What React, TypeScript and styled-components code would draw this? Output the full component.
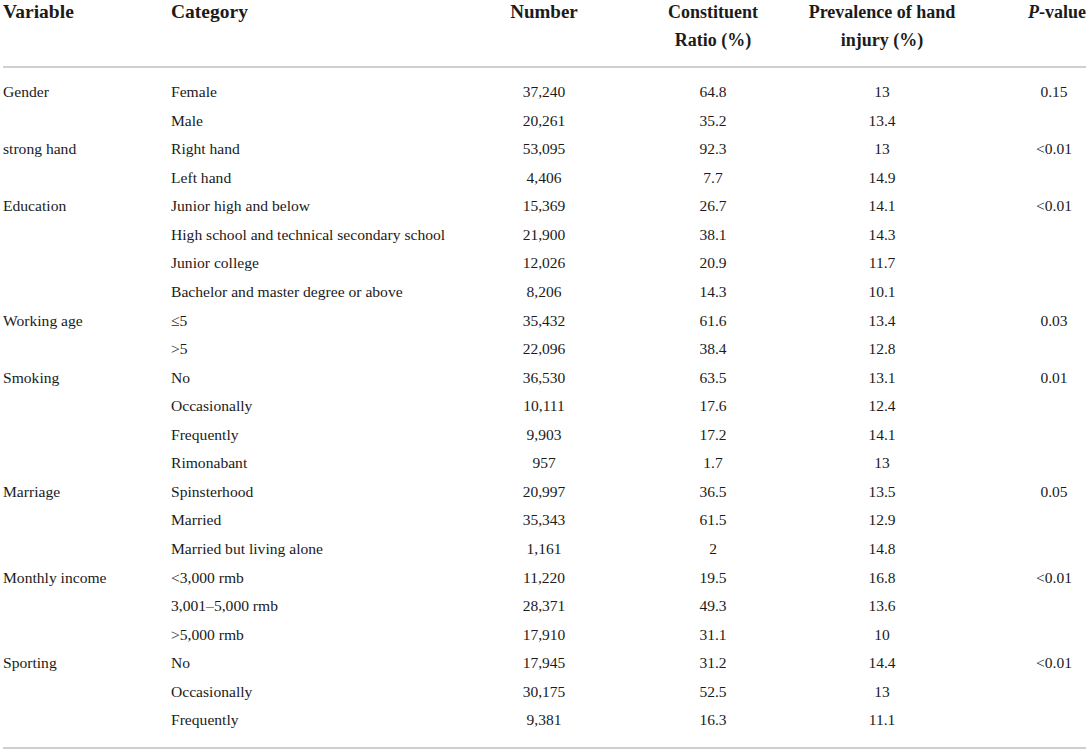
import React from "react";
import styled, { createGlobalStyle } from "styled-components";

const Global = createGlobalStyle`
  html, body { margin: 0; padding: 0; background: #fff; }
  body { font-family: "Liberation Serif", "Times New Roman", serif; color: #1b1b1b; }
`;

const Table = styled.table`
  width: 1083px;
  margin: -2px 0 0 3px;
  border-collapse: collapse;
  table-layout: fixed;
  font-family: "Liberation Serif", "Times New Roman", serif;
  color: #1b1b1b;
`;

const Head = styled.th<{ $align?: string; $size?: number }>`
  font-family: "Liberation Serif", "Times New Roman", serif;
  font-weight: bold;
  font-size: ${(p) => p.$size || 18}px;
  line-height: 28px;
  text-align: ${(p) => p.$align || "left"};
  vertical-align: top;
  padding: 0 0 12px 0;
  border-bottom: 2px solid #cfcfcf;
  white-space: nowrap;
  color: #1b1b1b;
`;

const Cell = styled.td<{ $num?: boolean; $pl?: number; $first?: boolean; $last?: boolean }>`
  font-family: "Liberation Serif", "Times New Roman", serif;
  font-size: ${(p) => (p.$num ? 15.5 : 15.6)}px;
  height: 28.57px;
  line-height: 28.57px;
  padding: ${(p) => (p.$first ? 10 : 0)}px 0 ${(p) => (p.$last ? 12 : 0)}px ${(p) => p.$pl || 0}px;
  text-align: ${(p) => (p.$num ? "center" : "left")};
  vertical-align: top;
  white-space: nowrap;
  color: #1b1b1b;
  border-bottom: ${(p) => (p.$last ? "2px solid #cfcfcf" : "none")};
`;

const Italic = styled.i`
  font-style: italic;
`;

type Row = [string, string, string, string, string, string];

const rows: Row[] = [
  ["Gender", "Female", "37,240", "64.8", "13", "0.15"],
  ["", "Male", "20,261", "35.2", "13.4", ""],
  ["strong hand", "Right hand", "53,095", "92.3", "13", "<0.01"],
  ["", "Left hand", "4,406", "7.7", "14.9", ""],
  ["Education", "Junior high and below", "15,369", "26.7", "14.1", "<0.01"],
  ["", "High school and technical secondary school", "21,900", "38.1", "14.3", ""],
  ["", "Junior college", "12,026", "20.9", "11.7", ""],
  ["", "Bachelor and master degree or above", "8,206", "14.3", "10.1", ""],
  ["Working age", "≤5", "35,432", "61.6", "13.4", "0.03"],
  ["", ">5", "22,096", "38.4", "12.8", ""],
  ["Smoking", "No", "36,530", "63.5", "13.1", "0.01"],
  ["", "Occasionally", "10,111", "17.6", "12.4", ""],
  ["", "Frequently", "9,903", "17.2", "14.1", ""],
  ["", "Rimonabant", "957", "1.7", "13", ""],
  ["Marriage", "Spinsterhood", "20,997", "36.5", "13.5", "0.05"],
  ["", "Married", "35,343", "61.5", "12.9", ""],
  ["", "Married but living alone", "1,161", "2", "14.8", ""],
  ["Monthly income", "<3,000 rmb", "11,220", "19.5", "16.8", "<0.01"],
  ["", "3,001–5,000 rmb", "28,371", "49.3", "13.6", ""],
  ["", ">5,000 rmb", "17,910", "31.1", "10", ""],
  ["Sporting", "No", "17,945", "31.2", "14.4", "<0.01"],
  ["", "Occasionally", "30,175", "52.5", "13", ""],
  ["", "Frequently", "9,381", "16.3", "11.1", ""],
];

export default function App() {
  return (
    <>
      <Global />
      <Table>
        <colgroup>
          <col style={{ width: 168 }} />
          <col style={{ width: 290 }} />
          <col style={{ width: 166 }} />
          <col style={{ width: 172 }} />
          <col style={{ width: 166 }} />
          <col style={{ width: 121 }} />
        </colgroup>
        <thead>
          <tr>
            <Head $size={19.5}>Variable</Head>
            <Head $size={19.5}>Category</Head>
            <Head $align="center" $size={19}>Number</Head>
            <Head $align="center">
              Constituent
              <br />
              Ratio (%)
            </Head>
            <Head $align="center">
              Prevalence of hand
              <br />
              injury (%)
            </Head>
            <Head $align="right">
              <Italic>P</Italic>-value
            </Head>
          </tr>
        </thead>
        <tbody>
          {rows.map((r, i) => {
            const first = i === 0;
            const last = i === rows.length - 1;
            return (
              <tr key={i}>
                <Cell $first={first} $last={last}>{r[0]}</Cell>
                <Cell $first={first} $last={last}>{r[1]}</Cell>
                <Cell $num $first={first} $last={last}>{r[2]}</Cell>
                <Cell $num $first={first} $last={last}>{r[3]}</Cell>
                <Cell $num $first={first} $last={last}>{r[4]}</Cell>
                <Cell $num $pl={57} $first={first} $last={last}>{r[5]}</Cell>
              </tr>
            );
          })}
        </tbody>
      </Table>
    </>
  );
}
